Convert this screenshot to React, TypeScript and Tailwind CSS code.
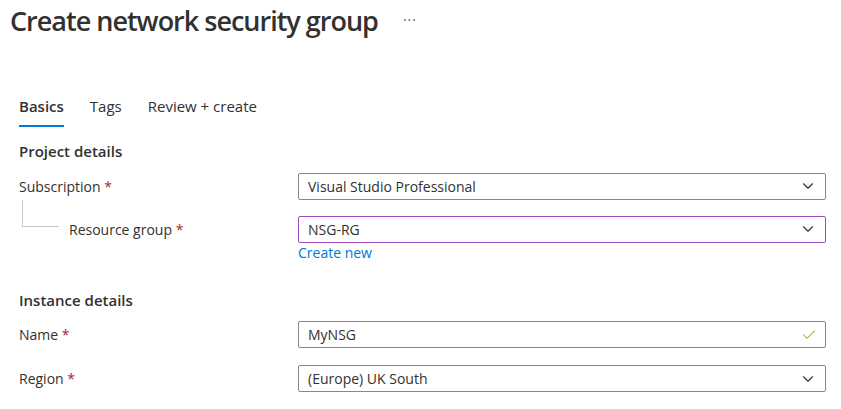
import { ChevronDown, Check } from "lucide-react";

const font = { fontFamily: '"Open Sans", "Noto Sans", sans-serif' };

function Label({ text, indent }: { text: string; indent?: boolean }) {
  return (
    <div className={`w-[279px] text-[14px] text-[#323130] ${indent ? "pl-[50px]" : ""}`}>
      {text} <span className="text-[#a4262c]">*</span>
    </div>
  );
}

function Field({ value, purple, valid }: { value: string; purple?: boolean; valid?: boolean }) {
  return (
    <div
      className={`flex h-[27px] w-[528px] items-center justify-between rounded-[2px] border pl-[9px] pr-[8px] text-[14px] text-[#323130] ${
        purple ? "border-[#a34cc0]" : "border-[#8a8886]"
      }`}
    >
      <span>{value}</span>
      {valid ? (
        <Check className="h-[16px] w-[16px] text-[#57a300]" strokeWidth={1.5} />
      ) : (
        <ChevronDown className="h-[18px] w-[18px] text-[#323130]" strokeWidth={1.5} />
      )}
    </div>
  );
}

export default function App() {
  return (
    <div className="h-[409px] w-[841px] overflow-hidden bg-white" style={font}>
      <div className="flex items-center pl-[10px] pt-[1px]">
        <h1 className="text-[27px] font-semibold tracking-[-1px] text-[#323130]">Create network security group</h1>
        <span className="ml-[25px] mt-[-4px] text-[14px] tracking-[1px] text-[#605e5c]">···</span>
      </div>

      <div className="mt-[53px] flex gap-[26px] pl-[19px] text-[15px] text-[#323130]">
        <div className="flex flex-col">
          <span className="font-semibold">Basics</span>
          <div className="mt-[8px] h-[2px] bg-[#0078d4]" />
        </div>
        <span>Tags</span>
        <span>Review + create</span>
      </div>

      <div className="mt-[13px] pl-[19px] pr-[15px]">
        <h2 className="text-[15px] font-semibold text-[#323130]">Project details</h2>

        <div className="mt-[10px] flex items-center">
          <Label text="Subscription" />
          <Field value="Visual Studio Professional" />
        </div>

        <div className="relative mt-[16px] flex items-center">
          <div className="absolute left-[3px] top-[-16px] h-[27px] w-[37px] border-b border-l border-[#c8c6c4]" />
          <Label text="Resource group" indent />
          <Field value="NSG-RG" purple />
        </div>
        <div className="ml-[279px] mt-[-1px] text-[14px] text-[#0078d4]">Create new</div>

        <h2 className="mt-[26px] text-[15px] font-semibold text-[#323130]">Instance details</h2>

        <div className="mt-[10px] flex items-center">
          <Label text="Name" />
          <Field value="MyNSG" valid />
        </div>

        <div className="mt-[17px] flex items-center">
          <Label text="Region" />
          <Field value="(Europe) UK South" />
        </div>
      </div>
    </div>
  );
}
